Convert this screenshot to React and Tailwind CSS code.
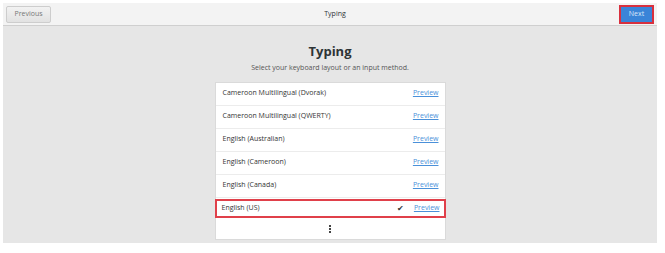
import React from 'react';

const layouts = [
  { name: 'Cameroon Multilingual (Dvorak)' },
  { name: 'Cameroon Multilingual (QWERTY)' },
  { name: 'English (Australian)' },
  { name: 'English (Cameroon)' },
  { name: 'English (Canada)' },
  { name: 'English (US)', selected: true },
];

const font = { fontFamily: '"Open Sans", "Noto Sans", sans-serif' };

const LayoutRow = ({ name, selected }) => (
  <div
    className={
      selected
        ? 'flex h-[19px] items-center border-2 border-[#e0404a] pl-[5px] pr-[4px] mt-[1px] mb-[1px] mx-[-1px]'
        : 'flex h-[23px] items-center border-b border-[#ececec] pl-[7px] pr-[6px]'
    }
  >
    <span className="flex-1 text-[7px] text-[#333]">{name}</span>
    {selected && <span className="mr-[10px] text-[8px] text-[#2e3436]">✔</span>}
    <span className="text-[7px] text-[#4a90d9] underline">Preview</span>
  </div>
);

export default function App() {
  return (
    <div className="w-[665px] h-[253px] bg-white p-[3px]" style={font}>
      <div className="w-[654px] h-[240px] flex flex-col bg-[#e6e6e6]">
        {/* barre d'en-tête */}
        <div className="h-[23px] flex items-center justify-between bg-[#f3f3f3] border-b border-[#cfcfcf] px-[3px]">
          <button className="h-[17px] w-[45px] rounded-[2px] border border-[#cdcdcd] bg-gradient-to-b from-[#f2f2f2] to-[#e2e2e2] text-[7px] text-[#777]">
            Previous
          </button>
          <span className="text-[7px] text-[#2e3436]">Typing</span>
          <button className="h-[19px] w-[35px] border-2 border-[#d8303e] bg-[#3a84d8] text-[7px] text-[#dbe8f8]">
            Next
          </button>
        </div>

        {/* contenu */}
        <div className="flex flex-col items-center pt-[17px]">
          <h1 className="text-[13px] font-bold leading-[17px] text-[#2e3436]">Typing</h1>
          <p className="mt-[3px] text-[7px] text-[#555]">Select your keyboard layout or an input method.</p>
          <div className="mt-[8px] w-[231px] bg-white border border-[#dadada]">
            {layouts.map(l => (
              <LayoutRow key={l.name} {...l} />
            ))}
            <div className="h-[20px] flex flex-col items-center justify-center gap-[1px]">
              <span className="block w-[2px] h-[2px] bg-[#444]" />
              <span className="block w-[2px] h-[2px] bg-[#444]" />
              <span className="block w-[2px] h-[2px] bg-[#444]" />
            </div>
          </div>
        </div>
      </div>
    </div>
  );
}
